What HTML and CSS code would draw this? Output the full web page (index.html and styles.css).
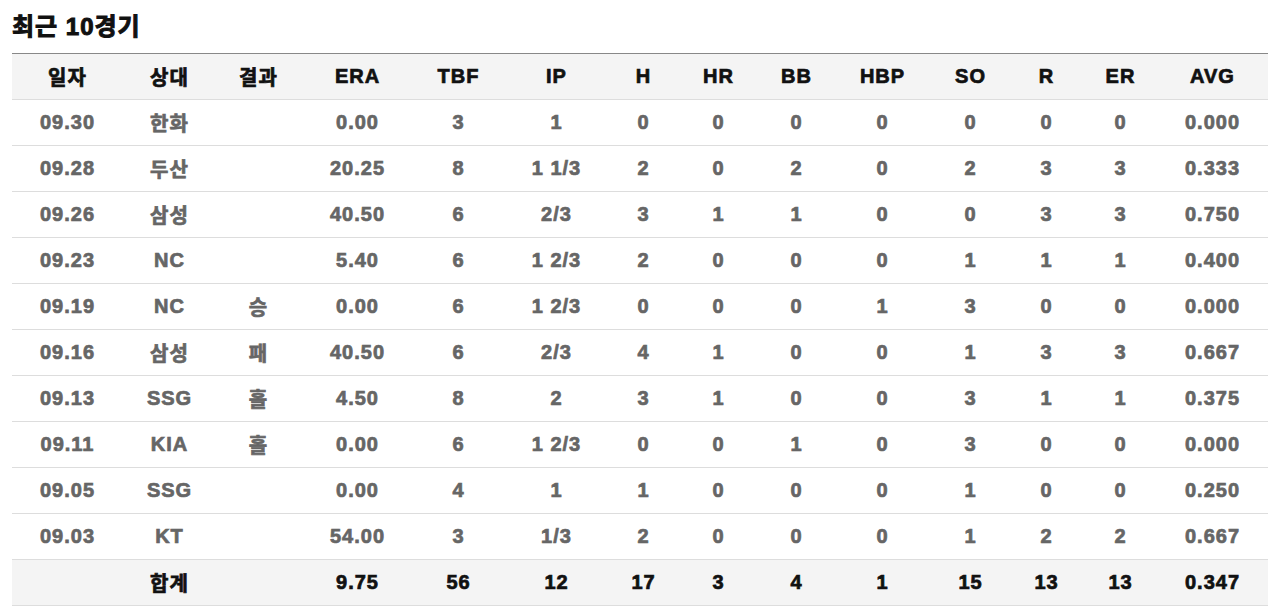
FILE: index.html
```html
<!DOCTYPE html>
<html lang="ko">
<head>
<meta charset="utf-8">
<link rel="stylesheet" href="styles.css">
</head>
<body>
<div class="wrap">
  <h2 class="title">최근 10경기</h2>
  <table class="stats">
    <colgroup>
      <col class="c1"><col class="c2"><col class="c3"><col class="c4"><col class="c5"><col class="c6"><col class="c7"><col class="c8"><col class="c9"><col class="c10"><col class="c11"><col class="c12"><col class="c13"><col class="c14">
    </colgroup>
    <thead>
      <tr><th>일자</th><th>상대</th><th>결과</th><th>ERA</th><th>TBF</th><th>IP</th><th>H</th><th>HR</th><th>BB</th><th>HBP</th><th>SO</th><th>R</th><th>ER</th><th>AVG</th></tr>
    </thead>
    <tbody>
      <tr><td>09.30</td><td>한화</td><td></td><td>0.00</td><td>3</td><td>1</td><td>0</td><td>0</td><td>0</td><td>0</td><td>0</td><td>0</td><td>0</td><td>0.000</td></tr>
      <tr><td>09.28</td><td>두산</td><td></td><td>20.25</td><td>8</td><td>1 1/3</td><td>2</td><td>0</td><td>2</td><td>0</td><td>2</td><td>3</td><td>3</td><td>0.333</td></tr>
      <tr><td>09.26</td><td>삼성</td><td></td><td>40.50</td><td>6</td><td>2/3</td><td>3</td><td>1</td><td>1</td><td>0</td><td>0</td><td>3</td><td>3</td><td>0.750</td></tr>
      <tr><td>09.23</td><td>NC</td><td></td><td>5.40</td><td>6</td><td>1 2/3</td><td>2</td><td>0</td><td>0</td><td>0</td><td>1</td><td>1</td><td>1</td><td>0.400</td></tr>
      <tr><td>09.19</td><td>NC</td><td>승</td><td>0.00</td><td>6</td><td>1 2/3</td><td>0</td><td>0</td><td>0</td><td>1</td><td>3</td><td>0</td><td>0</td><td>0.000</td></tr>
      <tr><td>09.16</td><td>삼성</td><td>패</td><td>40.50</td><td>6</td><td>2/3</td><td>4</td><td>1</td><td>0</td><td>0</td><td>1</td><td>3</td><td>3</td><td>0.667</td></tr>
      <tr><td>09.13</td><td>SSG</td><td>홀</td><td>4.50</td><td>8</td><td>2</td><td>3</td><td>1</td><td>0</td><td>0</td><td>3</td><td>1</td><td>1</td><td>0.375</td></tr>
      <tr><td>09.11</td><td>KIA</td><td>홀</td><td>0.00</td><td>6</td><td>1 2/3</td><td>0</td><td>0</td><td>1</td><td>0</td><td>3</td><td>0</td><td>0</td><td>0.000</td></tr>
      <tr><td>09.05</td><td>SSG</td><td></td><td>0.00</td><td>4</td><td>1</td><td>1</td><td>0</td><td>0</td><td>0</td><td>1</td><td>0</td><td>0</td><td>0.250</td></tr>
      <tr><td>09.03</td><td>KT</td><td></td><td>54.00</td><td>3</td><td>1/3</td><td>2</td><td>0</td><td>0</td><td>0</td><td>1</td><td>2</td><td>2</td><td>0.667</td></tr>
    </tbody>
    <tfoot>
      <tr><td></td><td>합계</td><td></td><td>9.75</td><td>56</td><td>12</td><td>17</td><td>3</td><td>4</td><td>1</td><td>15</td><td>13</td><td>13</td><td>0.347</td></tr>
    </tfoot>
  </table>
</div>
</body>
</html>
```
FILE: styles.css
```css
* { box-sizing: border-box; }
body {
  margin: 0;
  background: #fff;
  font-family: "Liberation Sans", "Noto Sans CJK KR", sans-serif;
}
.wrap {
  padding: 10px 6px 0 12px;
}
.title {
  margin: 0 0 9px 0;
  font-size: 24px;
  line-height: 34px;
  font-weight: 700;
  letter-spacing: 1px;
  color: #111;
  -webkit-text-stroke: 1px #111;
}
.stats {
  width: 1256px;
  border-collapse: collapse;
  table-layout: fixed;
  border-top: 1px solid #888;
}
.c1 { width: 110px; }
.c2 { width: 94px; }
.c3 { width: 84px; }
.c4 { width: 114px; }
.c5 { width: 88px; }
.c6 { width: 108px; }
.c7 { width: 66px; }
.c8 { width: 84px; }
.c9 { width: 72px; }
.c10 { width: 100px; }
.c11 { width: 76px; }
.c12 { width: 76px; }
.c13 { width: 72px; }
.c14 { width: 112px; }
.stats th, .stats td {
  height: 46px;
  padding: 0 0 0 1px;
  text-align: center;
  font-size: 20px;
  font-weight: 700;
  letter-spacing: 1px;
  border-bottom: 1px solid #ddd;
}
.stats th {
  background: #f4f4f4;
  color: #111;
  -webkit-text-stroke: 0.7px #111;
}
.stats td {
  color: #666;
  -webkit-text-stroke: 0.7px #666;
}
.stats tfoot td {
  background: #f4f4f4;
  color: #111;
  -webkit-text-stroke: 0.7px #111;
}
```
